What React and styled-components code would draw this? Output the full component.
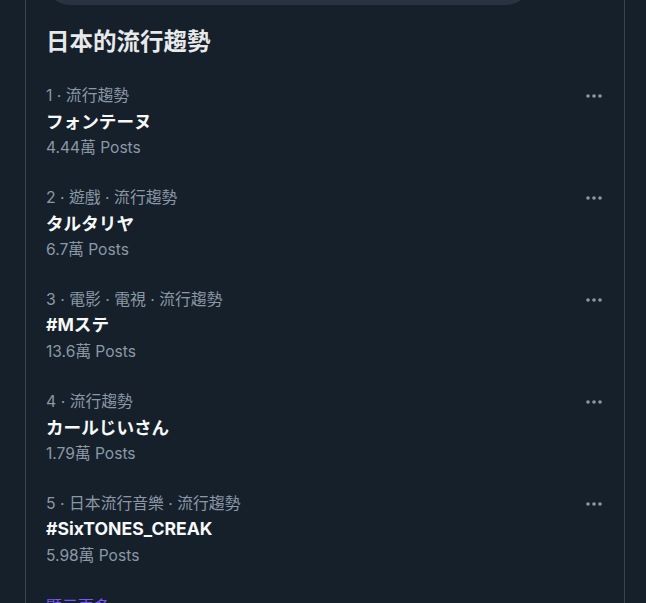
import React from 'react';
import styled, { createGlobalStyle } from 'styled-components';

const GlobalStyle = createGlobalStyle`
  html, body {
    margin: 0;
    padding: 0;
    background: #15202b;
    overflow: hidden;
  }
  body {
    font-family: "Inter", "Noto Sans CJK TC", "Noto Sans CJK JP", sans-serif;
    -webkit-font-smoothing: antialiased;
  }
`;

const Page = styled.div`
  width: 646px;
  height: 603px;
  background: #15202b;
  padding-left: 25px;
  box-sizing: border-box;
  overflow: hidden;
`;

const Column = styled.div`
  width: 600px;
  min-height: 603px;
  box-sizing: border-box;
  border-left: 1px solid #38444d;
  border-right: 1px solid #38444d;
`;

const SearchBar = styled.div`
  height: 50px;
  margin: -45px 0 0 19px;
  width: 486px;
  border-radius: 25px;
  background: #273340;
`;

const Title = styled.h2`
  margin: 19px 0 0;
  padding: 0 20px;
  font-size: 23.5px;
  line-height: 32px;
  font-weight: 700;
  color: #e7e9ea;
  font-family: "Noto Sans CJK TC", sans-serif;
`;

const List = styled.div`
  margin-top: 28px;
`;

const Item = styled.div`
  position: relative;
  padding: 0 20px 26px;
`;

const Meta = styled.div`
  font-size: 15.8px;
  line-height: 24px;
  color: #8b98a5;
`;

const Name = styled.div`
  font-size: 17.6px;
  line-height: 26px;
  font-weight: 700;
  color: #f7f9f9;
  font-family: ${p => (p.latin ? '"Inter", "Noto Sans CJK JP", sans-serif' : '"Noto Sans CJK JP", sans-serif')};
`;

const Count = styled.div`
  margin-top: 2px;
  font-size: 15.6px;
  line-height: 24px;
  color: #8b98a5;
`;

const More = styled.button`
  position: absolute;
  top: 2px;
  right: 15px;
  width: 30px;
  height: 20px;
  padding: 0;
  border: none;
  background: none;
  display: flex;
  align-items: center;
  justify-content: center;
  cursor: pointer;
`;

const ShowMore = styled.div`
  margin-top: -1px;
  padding: 0 20px;
  font-size: 16px;
  line-height: 24px;
  color: #7856ff;
  font-family: "Noto Sans CJK TC", sans-serif;
`;

const trends = [
  { meta: '1 · 流行趨勢', name: 'フォンテーヌ', count: '4.44萬 Posts' },
  { meta: '2 · 遊戲 · 流行趨勢', name: 'タルタリヤ', count: '6.7萬 Posts' },
  { meta: '3 · 電影 · 電視 · 流行趨勢', name: '#Mステ', count: '13.6萬 Posts', latin: true },
  { meta: '4 · 流行趨勢', name: 'カールじいさん', count: '1.79萬 Posts' },
  { meta: '5 · 日本流行音樂 · 流行趨勢', name: '#SixTONES_CREAK', count: '5.98萬 Posts', latin: true },
];

const Dots = () => (
  <svg width="18" height="6" viewBox="0 0 18 6">
    <circle cx="3" cy="3" r="1.8" fill="#8b98a5" />
    <circle cx="9" cy="3" r="1.8" fill="#8b98a5" />
    <circle cx="15" cy="3" r="1.8" fill="#8b98a5" />
  </svg>
);

export default function App() {
  return (
    <Page>
      <GlobalStyle />
      <Column>
        <SearchBar />
        <Title>日本的流行趨勢</Title>
        <List>
          {trends.map(t => (
            <Item key={t.meta}>
              <Meta>{t.meta}</Meta>
              <Name latin={t.latin}>{t.name}</Name>
              <Count>{t.count}</Count>
              <More aria-label="More">
                <Dots />
              </More>
            </Item>
          ))}
        </List>
        <ShowMore>顯示更多</ShowMore>
      </Column>
    </Page>
  );
}
